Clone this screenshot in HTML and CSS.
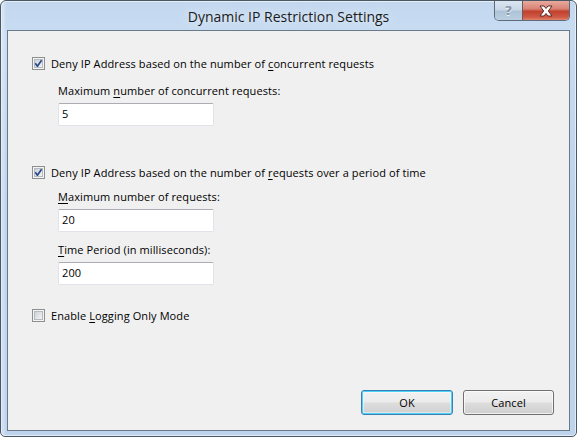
FILE: index.html
```html
<!DOCTYPE html>
<html>
<head>
<meta charset="utf-8">
<link rel="stylesheet" href="styles.css">
</head>
<body>
<div class="window">
  <div class="titlebar">
    <div></div>
    <div class="title">Dynamic IP Restriction Settings</div>
    <div class="caption-btns">
      <div class="cbtn help"><span>?</span></div>
      <div class="cbtn close">
        <svg width="20" height="12" viewBox="0 0 20 12"><path d="M4 1 L8 1 L10 3.5 L12 1 L16 1 L12.3 6 L16 11 L12 11 L10 8.5 L8 11 L4 11 L7.7 6 Z" fill="#fff" stroke="#5a2a24" stroke-width="1" stroke-linejoin="round"/></svg>
      </div>
    </div>
  </div>
  <div class="client">
    <div class="check-row r1">
      <svg class="cb" width="13" height="13" viewBox="0 0 13 13"><defs><linearGradient id="g1" x1="0" y1="0" x2="1" y2="1"><stop offset="0" stop-color="#cbcfd5"/><stop offset="1" stop-color="#f6f6f6"/></linearGradient></defs><rect x="0.5" y="0.5" width="12" height="12" fill="#f4f4f4" stroke="#8e8f8f"/><rect x="2.5" y="2.5" width="8" height="8" fill="url(#g1)" stroke="#b5b9c0"/><path d="M3.3 6.3 L5.4 9.2 L9.6 3.2" fill="none" stroke="#2a4a8e" stroke-width="1.7" stroke-linejoin="round"/></svg>
      <span>Deny IP Address based on the number of <u>c</u>oncurrent requests</span>
    </div>
    <div class="field f1">
      <div class="label">Maximum <u>n</u>umber of concurrent requests:</div>
      <div class="input">5</div>
    </div>
    <div class="check-row r2">
      <svg class="cb" width="13" height="13" viewBox="0 0 13 13"><defs><linearGradient id="g2" x1="0" y1="0" x2="1" y2="1"><stop offset="0" stop-color="#cbcfd5"/><stop offset="1" stop-color="#f6f6f6"/></linearGradient></defs><rect x="0.5" y="0.5" width="12" height="12" fill="#f4f4f4" stroke="#8e8f8f"/><rect x="2.5" y="2.5" width="8" height="8" fill="url(#g2)" stroke="#b5b9c0"/><path d="M3.3 6.3 L5.4 9.2 L9.6 3.2" fill="none" stroke="#2a4a8e" stroke-width="1.7" stroke-linejoin="round"/></svg>
      <span>Deny IP Address based on the number of <u>r</u>equests over a period of time</span>
    </div>
    <div class="field f2">
      <div class="label"><u>M</u>aximum number of requests:</div>
      <div class="input">20</div>
    </div>
    <div class="field f3">
      <div class="label"><u>T</u>ime Period (in milliseconds):</div>
      <div class="input">200</div>
    </div>
    <div class="check-row r3">
      <svg class="cb" width="13" height="13" viewBox="0 0 13 13"><defs><linearGradient id="g3" x1="0" y1="0" x2="1" y2="1"><stop offset="0" stop-color="#cbcfd5"/><stop offset="1" stop-color="#f6f6f6"/></linearGradient></defs><rect x="0.5" y="0.5" width="12" height="12" fill="#f4f4f4" stroke="#8e8f8f"/><rect x="2.5" y="2.5" width="8" height="8" fill="url(#g3)" stroke="#b5b9c0"/></svg>
      <span>Enable <u>L</u>ogging Only Mode</span>
    </div>
    <div class="footer">
      <div class="btn default">OK</div>
      <div class="btn">Cancel</div>
    </div>
  </div>
</div>
</body>
</html>
```

FILE: styles.css
```css
html, body {
  margin: 0;
  padding: 0;
  background: #ffffff;
}
.window {
  box-sizing: border-box;
  width: 577px;
  height: 437px;
  border: 1px solid #4a5866;
  border-radius: 6px 6px 5px 5px;
  padding: 0 6px 5px 6px;
  display: flex;
  flex-direction: column;
  background:
    linear-gradient(90deg, rgba(255,255,255,0.0) 0px, rgba(255,255,255,0.35) 2px, rgba(255,255,255,0) 5px),
    linear-gradient(180deg, #c3d8ef 0%, #c8dcf2 8%, #bcd3ec 50%, #bed4ec 100%);
  box-shadow: inset 0 0 0 1px rgba(255,255,255,0.55);
  font-family: "Open Sans", "Noto Sans", sans-serif;
}
.titlebar {
  height: 29px;
  display: grid;
  grid-template-columns: 1fr auto 1fr;
  align-items: start;
}
.title {
  font-size: 14px;
  color: #1b1b1b;
  line-height: 19px;
  padding-top: 6px;
  text-shadow: 0 0 8px rgba(255,255,255,0.9);
}
.caption-btns {
  justify-self: end;
  display: flex;
  height: 20px;
  border: 1px solid #5d6b7b;
  border-top: none;
  border-radius: 0 0 5px 5px;
  overflow: hidden;
  box-sizing: border-box;
}
.cbtn {
  display: flex;
  align-items: center;
  justify-content: center;
  height: 19px;
}
.help {
  width: 27px;
  background: linear-gradient(180deg, #dbe6f1 0%, #c9d8e7 45%, #afc3d7 55%, #bccfe1 100%);
  border-right: 1px solid #6b5b5b;
}
.help span {
  font-family: "DejaVu Sans", sans-serif;
  font-weight: bold;
  font-size: 13px;
  color: #8a97a6;
  text-shadow: 0 1px 0 #f4f8fc;
  line-height: 1;
}
.close {
  width: 46px;
  background: linear-gradient(180deg, #e9a99e 0%, #d98576 40%, #c2412f 55%, #cf5a45 85%, #e2836d 100%);
}
.client {
  flex: 1;
  background: #f0f0f0;
  border: 1px solid #6b7a8b;
  padding: 25px 15px 15px 24px;
  display: flex;
  flex-direction: column;
  font-size: 11px;
  letter-spacing: 0.1px;
  color: #000;
}
.check-row {
  display: flex;
  align-items: center;
  gap: 6px;
  height: 15px;
  line-height: 15px;
}
.cb { flex: none; }
.r2 { margin-top: 39px; }
.r3 { margin-top: 23px; }
.field {
  margin-left: 26px;
}
.f1 { margin-top: 12px; }
.f2 { margin-top: 9px; }
.f3 { margin-top: 10px; }
.label {
  line-height: 15px;
  height: 15px;
}
.input {
  margin-top: 5px;
  box-sizing: border-box;
  width: 156px;
  height: 23px;
  background: #fff;
  border: 1px solid #e2e3ea;
  border-top-color: #abadb3;
  border-left-color: #e2e3ea;
  border-radius: 2px;
  padding: 0 3px;
  line-height: 20px;
}
u {
  text-decoration-thickness: 1px;
  text-underline-offset: 2px;
}
.footer {
  margin-top: auto;
  display: flex;
  justify-content: flex-end;
  gap: 10px;
}
.btn {
  box-sizing: border-box;
  width: 91px;
  height: 25px;
  border: 1px solid #707070;
  border-radius: 3px;
  background: linear-gradient(180deg, #f2f2f2 0%, #ebebeb 48%, #dddddd 52%, #cfcfcf 100%);
  box-shadow: inset 0 0 0 1px rgba(255,255,255,0.7);
  display: flex;
  align-items: center;
  justify-content: center;
  font-size: 11px;
}
.btn.default {
  border-color: #3c7fb1;
  box-shadow: inset 0 0 0 1px #48d3fb, inset 0 0 0 2px rgba(255,255,255,0.4);
  width: 92px;
}
```
